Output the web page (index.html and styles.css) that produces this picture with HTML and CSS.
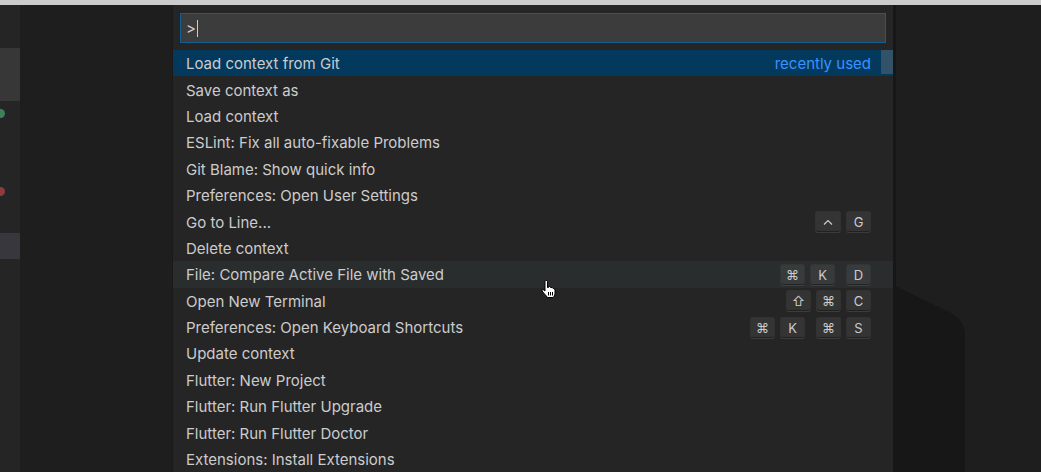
FILE: index.html
```html
<!DOCTYPE html>
<html>
<head>
<meta charset="utf-8">
<link rel="stylesheet" href="styles.css">
</head>
<body>
<div class="titlebar"></div>
<div class="main">
  <div class="sidebar">
    <div class="sb-block sb-a"></div>
    <div class="sb-dot sb-green"></div>
    <div class="sb-dot sb-red"></div>
    <div class="sb-block sb-b"></div>
  </div>
  <div class="editor">
    <svg class="backshadow" width="200" height="200" viewBox="0 0 200 200">
      <path d="M0 0 L58 28 Q72 36 72 50 L72 200 L0 200 Z" fill="#171717"/>
    </svg>
    <div class="quickopen">
      <div class="inputbox"><span class="prompt">&gt;</span><span class="caret"></span></div>
      <div class="list">
        <div class="row selected"><span class="label">Load context from Git</span><span class="desc">recently used</span></div>
        <div class="row"><span class="label">Save context as</span></div>
        <div class="row"><span class="label">Load context</span></div>
        <div class="row"><span class="label">ESLint: Fix all auto-fixable Problems</span></div>
        <div class="row"><span class="label">Git Blame: Show quick info</span></div>
        <div class="row"><span class="label">Preferences: Open User Settings</span></div>
        <div class="row"><span class="label">Go to Line...</span><span class="keys"><span class="chord"><kbd class="key sym"><svg width="10" height="6" viewBox="0 0 10 6"><path d="M1 5.5 L5 1.5 L9 5.5" fill="none" stroke="#cccccc" stroke-width="1.2"/></svg></kbd><kbd class="key">G</kbd></span></span></div>
        <div class="row"><span class="label">Delete context</span></div>
        <div class="row hover"><span class="label">File: Compare Active File with Saved</span><span class="keys"><span class="chord"><kbd class="key">⌘</kbd><kbd class="key">K</kbd></span><span class="chord"><kbd class="key">D</kbd></span></span></div>
        <div class="row"><span class="label">Open New Terminal</span><span class="keys"><span class="chord"><kbd class="key">⇧</kbd><kbd class="key">⌘</kbd><kbd class="key">C</kbd></span></span></div>
        <div class="row"><span class="label">Preferences: Open Keyboard Shortcuts</span><span class="keys"><span class="chord"><kbd class="key">⌘</kbd><kbd class="key">K</kbd></span><span class="chord"><kbd class="key">⌘</kbd><kbd class="key">S</kbd></span></span></div>
        <div class="row"><span class="label">Update context</span></div>
        <div class="row"><span class="label">Flutter: New Project</span></div>
        <div class="row"><span class="label">Flutter: Run Flutter Upgrade</span></div>
        <div class="row"><span class="label">Flutter: Run Flutter Doctor</span></div>
        <div class="row"><span class="label">Extensions: Install Extensions</span></div>
      </div>
      <div class="thumb"></div>
    </div>
    <svg class="cursor" width="18" height="20" viewBox="0 0 18 20">
      <path d="M5.5 1.5 Q7 1 7.5 2.5 L7.5 8.5 L8.5 8.5 L8.5 7.5 Q10 7 10.5 8.5 L11 8.5 Q12.5 8 13 9.5 L13.5 9.5 Q15 9.5 15 11 L15 15 Q14.5 17.5 13 18.5 L7.5 18.5 Q6.5 17 5 15.5 L2 12 Q1.5 10.5 3 10.5 L5 12 L5 2.5 Z" fill="#fff" stroke="#000" stroke-width="1"/>
      <path d="M8.5 13 L8.5 16.5 M10.5 13 L10.5 16.5 M12.5 13 L12.5 16.5" stroke="#000" stroke-width="1"/>
    </svg>
  </div>
</div>
</body>
</html>
```

FILE: styles.css
```css
* { box-sizing: border-box; }
html, body {
  margin: 0;
  padding: 0;
  width: 1041px;
  height: 472px;
  overflow: hidden;
  background: #1e1e1e;
  font-family: Inter, "Noto Sans", sans-serif;
}
.titlebar {
  height: 5px;
  background: #cccccc;
}
.main {
  display: flex;
  height: 467px;
}
.sidebar {
  width: 20px;
  background: #252526;
  position: relative;
}
.sb-block {
  position: absolute;
  left: 0;
  width: 20px;
}
.sb-a { top: 43px; height: 53px; background: #373737; }
.sb-b { top: 228px; height: 26px; background: #37373d; }
.sb-dot {
  position: absolute;
  width: 9px;
  height: 9px;
  border-radius: 50%;
  left: -4px;
}
.sb-green { top: 104px; background: #3e8058; }
.sb-red { top: 182px; background: #8c3c3c; }
.editor {
  flex: 1;
  position: relative;
  padding-left: 152px;
}
.backshadow {
  position: absolute;
  left: 873px;
  top: 280px;
}
.quickopen {
  position: relative;
  width: 724px;
  height: 100%;
  background: #252526;
  border-left: 1px solid #1a1a1a;
  border-right: 3px solid #171717;
  padding-top: 8px;
}
.inputbox {
  margin: 0 7px;
  height: 30px;
  background: #3c3c3c;
  border: 1px solid #0e5f94;
  display: flex;
  align-items: center;
  padding-left: 5px;
  color: #cccccc;
  font-size: 15px;
}
.caret {
  width: 1px;
  height: 17px;
  background: #cccccc;
  margin-left: 1px;
}
.list {
  margin-top: 7px;
}
.row {
  height: 26.4px;
  display: flex;
  align-items: center;
  padding: 1px 22px 0 13px;
  color: #cccccc;
  font-size: 15px;
  white-space: nowrap;
}
.row.selected { background: #04395e; }
.row.hover { background: #2a2d2e; }
.label { flex: 1; }
.desc { color: #3794ff; }
.keys {
  display: flex;
  gap: 11px;
}
.chord {
  display: flex;
  gap: 5px;
}
.key {
  font-family: Inter, "DejaVu Sans", sans-serif;
  display: inline-flex;
  align-items: center;
  justify-content: center;
  min-width: 25px;
  height: 22px;
  padding: 0 4px;
  font-size: 13px;
  color: #cccccc;
  background: rgba(128,128,128,0.17);
  border: 1px solid rgba(51,51,51,0.6);
  border-bottom-color: rgba(68,68,68,0.6);
  border-radius: 3px;
  box-shadow: inset 0 -1px 0 rgba(0,0,0,0.36);
}
.key.sym {
  min-width: 26px;
}
.thumb {
  position: absolute;
  right: 0;
  top: 45px;
  width: 12px;
  height: 24px;
  background: rgba(121,121,121,0.4);
}
.cursor {
  position: absolute;
  left: 520px;
  top: 274px;
}
```
